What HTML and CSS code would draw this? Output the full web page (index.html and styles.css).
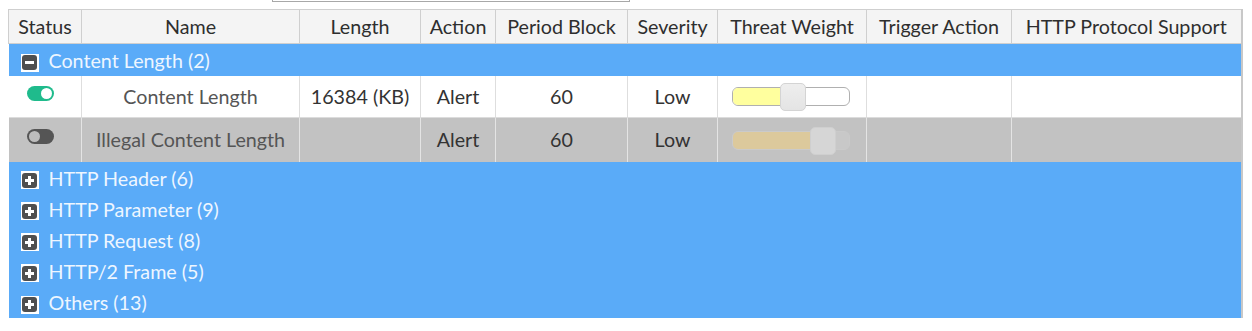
FILE: index.html
```html
<!DOCTYPE html>
<html>
<head>
<meta charset="utf-8">
<link rel="stylesheet" href="styles.css">
</head>
<body>
<div class="topbox"></div>
<table class="grid">
  <colgroup>
    <col style="width:73px"><col style="width:218px"><col style="width:121px"><col style="width:75px"><col style="width:132px"><col style="width:90px"><col style="width:149px"><col style="width:145px"><col style="width:230px">
  </colgroup>
  <thead>
    <tr class="head">
      <th>Status</th><th>Name</th><th>Length</th><th>Action</th><th>Period Block</th><th>Severity</th><th>Threat Weight</th><th>Trigger Action</th><th>HTTP Protocol Support</th>
    </tr>
  </thead>
  <tbody>
    <tr class="group first">
      <td colspan="9"><span class="exp"><span class="box minus"></span></span>Content Length (2)</td>
    </tr>
    <tr class="row on">
      <td><span class="toggle t-on"><span class="knob"></span></span></td>
      <td class="name">Content Length</td>
      <td>16384 (KB)</td>
      <td>Alert</td>
      <td>60</td>
      <td>Low</td>
      <td><div class="slider"><div class="fill" style="width:48px"></div><div class="handle" style="left:47px"></div></div></td>
      <td></td>
      <td></td>
    </tr>
    <tr class="row off">
      <td><span class="toggle t-off"><span class="knob"></span></span></td>
      <td class="name">Illegal Content Length</td>
      <td></td>
      <td>Alert</td>
      <td>60</td>
      <td>Low</td>
      <td><div class="slider dis"><div class="fill" style="width:78px"></div><div class="handle" style="left:77px"></div></div></td>
      <td></td>
      <td></td>
    </tr>
    <tr class="group">
      <td colspan="9"><span class="exp"><span class="box plus"></span></span>HTTP Header (6)</td>
    </tr>
    <tr class="group">
      <td colspan="9"><span class="exp"><span class="box plus"></span></span>HTTP Parameter (9)</td>
    </tr>
    <tr class="group">
      <td colspan="9"><span class="exp"><span class="box plus"></span></span>HTTP Request (8)</td>
    </tr>
    <tr class="group">
      <td colspan="9"><span class="exp"><span class="box plus"></span></span>HTTP/2 Frame (5)</td>
    </tr>
    <tr class="group">
      <td colspan="9"><span class="exp"><span class="box plus"></span></span>Others (13)</td>
    </tr>
  </tbody>
</table>
</body>
</html>
```
FILE: styles.css
```css
html, body {
  margin: 0;
  padding: 0;
  background: #ffffff;
}
body {
  font-family: Lato, "Open Sans", "Liberation Sans", sans-serif;
  color: #333333;
}
.topbox {
  margin-left: 272px;
  width: 356px;
  height: 1px;
  border: 1px solid #a8a8a8;
  border-top: none;
}
.grid {
  margin: 7px 0 0 8px;
  width: 1234px;
  border-collapse: collapse;
  table-layout: fixed;
  font-size: 19.7px;
  line-height: 22px;
  border-right: 2px solid #c8c8c8;
}
.head th {
  height: 33px;
  padding: 0;
  font-weight: normal;
  background: #f4f4f4;
  border: 1px solid #cfcfcf;
  color: #2e2e2e;
  text-align: center;
  white-space: nowrap;
}
.group td {
  height: 29px;
  padding: 2px 0 0 12px;
  background: #5aabf8;
  color: #eef6ff;
  border: none;
  white-space: nowrap;
  vertical-align: middle;
}
.group.first td {
  height: 30px;
}
.group:last-child td {
  height: 30px;
}
.exp {
  display: inline-flex;
  align-items: center;
  justify-content: center;
  width: 18px;
  height: 18px;
  background: #ffffff;
  vertical-align: -2px;
  margin-right: 10px;
}
.box {
  position: relative;
  display: block;
  width: 15px;
  height: 15px;
  border-radius: 3px;
  background: #4f4f4f;
}
.box::before {
  content: "";
  position: absolute;
  left: 3px;
  top: 6px;
  width: 9px;
  height: 3px;
  background: #ffffff;
}
.plus::after {
  content: "";
  position: absolute;
  left: 6px;
  top: 3px;
  width: 3px;
  height: 9px;
  background: #ffffff;
}
.row td {
  padding: 0;
  text-align: center;
  border-left: 1px solid #dedede;
  border-right: 1px solid #dedede;
  white-space: nowrap;
}
.row.on td {
  height: 41px;
  background: #ffffff;
  border-bottom: 1px solid #dcdcdc;
}
.row.off td {
  height: 44px;
  background: #c2c2c2;
  border-left-color: #e4e4e4;
  border-right-color: #e4e4e4;
}
.row td:first-child {
  border-left: none;
}
.name {
  color: #555555;
}
.toggle {
  position: relative;
  display: block;
  margin: 0 0 6px 18px;
  width: 27px;
  height: 15px;
  border-radius: 8px;
}
.t-on {
  background: #1fbb8c;
}
.t-off {
  background: #555555;
  margin-bottom: 8px;
}
.knob {
  position: absolute;
  top: 2px;
  width: 11px;
  height: 11px;
  border-radius: 50%;
}
.t-on .knob {
  right: 2px;
  background: #ffffff;
}
.t-off .knob {
  left: 2px;
  background: #bdbdbd;
}
.slider {
  position: relative;
  margin-left: 14px;
  width: 116px;
  height: 17px;
  border: 1px solid #b0b0b0;
  border-radius: 6px;
  background: #ffffff;
}
.fill {
  height: 100%;
  background: #ffff9e;
  border-radius: 5px 0 0 5px;
}
.handle {
  position: absolute;
  top: -5px;
  width: 24px;
  height: 26px;
  border: 1px solid #d4d4d4;
  border-radius: 5px;
  background: linear-gradient(#eeeeee, #e4e4e4);
}
.slider.dis {
  background: #c8c8c8;
  border-color: #cacaca;
}
.slider.dis .fill {
  background: #dcc99c;
}
.slider.dis .handle {
  background: #d6d6d6;
  border-color: #cfcfcf;
}
```
